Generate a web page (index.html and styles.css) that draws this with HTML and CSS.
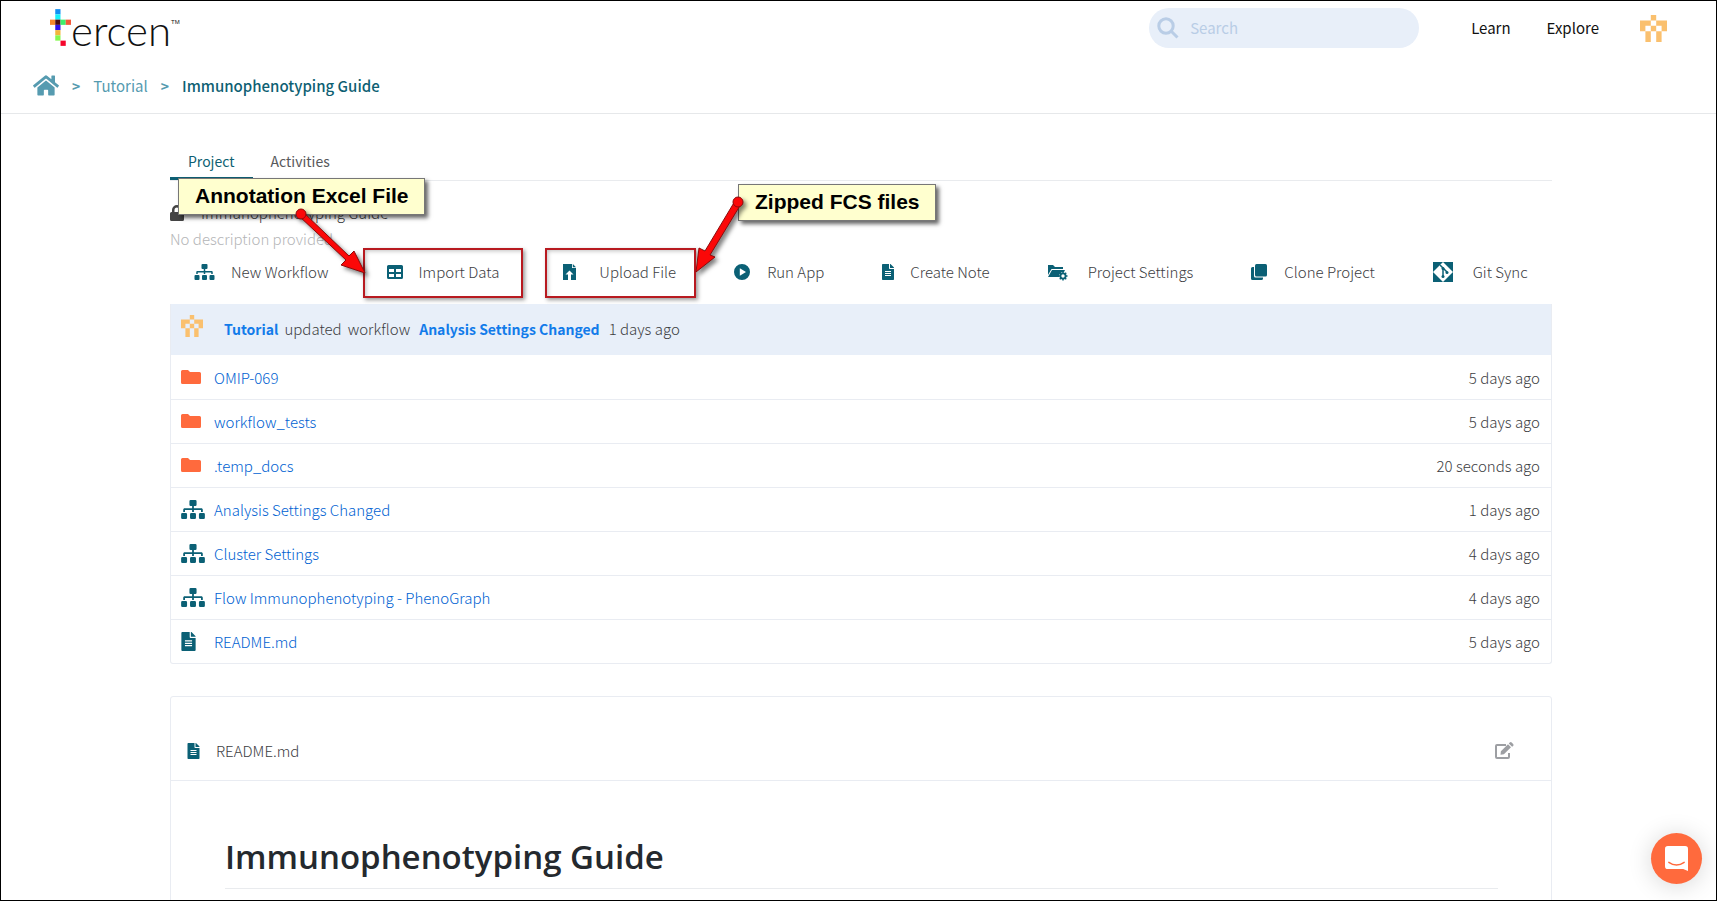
FILE: index.html
```html
<!DOCTYPE html>
<html lang="en">
<head>
<meta charset="utf-8">
<title>Immunophenotyping Guide - Tercen</title>
<link rel="stylesheet" href="styles.css">
</head>
<body>
<svg class="defs" aria-hidden="true">
  <symbol id="sitemap" viewBox="0 0 640 512"><path d="M128 352H32a32 32 0 0 0-32 32v96a32 32 0 0 0 32 32h96a32 32 0 0 0 32-32v-96a32 32 0 0 0-32-32zm-24-80h192v48h48v-48h192v48h48v-57c0-21-17-39-39-39H344v-64h40a32 32 0 0 0 32-32V32a32 32 0 0 0-32-32H256a32 32 0 0 0-32 32v96a32 32 0 0 0 32 32h40v64H95c-22 0-39 18-39 39v57h48zm264 80h-96a32 32 0 0 0-32 32v96a32 32 0 0 0 32 32h96a32 32 0 0 0 32-32v-96a32 32 0 0 0-32-32zm240 0h-96a32 32 0 0 0-32 32v96a32 32 0 0 0 32 32h96a32 32 0 0 0 32-32v-96a32 32 0 0 0-32-32z"/></symbol>
  <symbol id="file" viewBox="0 0 384 512"><path fill-rule="evenodd" d="M224 136V0H24A24 24 0 0 0 0 24v464a24 24 0 0 0 24 24h336a24 24 0 0 0 24-24V160H248a24 24 0 0 1-24-24zm64 248H96v-32h192zm0-64H96v-32h192zm0-64H96v-32h192zM384 122v6H256V0h6c6 0 13 3 17 7l98 98c4 4 7 11 7 17z"/></symbol>
  <symbol id="folder" viewBox="0 0 20 14"><path d="M1.500 0H7l2 2h9.500A1.500 1.500 0 0 1 20 3.500v9a1.500 1.500 0 0 1-1.500 1.500h-17A1.500 1.500 0 0 1 0 12.500v-11A1.500 1.500 0 0 1 1.500 0z"/></symbol>
  <symbol id="avatar" viewBox="0 0 5 5"><path d="M2 0h1v1h-1zM0 1h2v1h-1v1h-1zM3 1h2v2h-1v-1h-1zM2 2h1v1h-1zM1 3h1v2h-1zM3 3h1v2h-1z"/></symbol>
</svg>

<header class="header">
  <div class="topbar">
    <a class="logo" href="#" aria-label="tercen">
      <svg class="logo-mark" viewBox="0 0 4 7" aria-hidden="true">
        <path fill="#118ef2" d="M1 0h1v1H1z"/><path fill="#16f1f9" d="M1 1h1v1H1z"/>
        <path fill="#f68a2c" d="M0 2h1v1H0z"/><path fill="#4a0d10" d="M1 2h1v1H1z"/><path fill="#3ef06c" d="M2 2h1v1H2z"/><path fill="#f4593a" d="M3 2h1v1H3z"/>
        <path fill="#2b12ea" d="M1 3h1v1H1z"/><path fill="#f1b53c" d="M1 4h1v1H1z"/><path fill="#83f84e" d="M1 5h1v1H1z"/><path fill="#f5062c" d="M2 6h1v1H2z"/>
      </svg>
      <span class="logo-word">ercen</span><span class="logo-tm">TM</span>
    </a>
    <nav class="topnav">
      <label class="search">
        <svg viewBox="0 0 22 22" aria-hidden="true"><circle cx="9" cy="9" r="7.200"/><path d="M14.500 14.500L20.500 20.500"/></svg>
        <input type="search" placeholder="Search" aria-label="Search">
      </label>
      <a class="learn" href="#">Learn</a>
      <a class="explore" href="#">Explore</a>
      <a class="me" href="#" aria-label="Account"><svg class="avatar" preserveAspectRatio="none"><use href="#avatar"/></svg></a>
    </nav>
  </div>
  <nav class="crumbs" aria-label="Breadcrumb">
    <a href="#" aria-label="Home"><svg class="home" viewBox="0 0 576 512"><path d="M280 148L96 300v164a16 16 0 0 0 16 16h112a16 16 0 0 0 16-16v-96a16 16 0 0 1 16-16h64a16 16 0 0 1 16 16v96a16 16 0 0 0 16 16h112a16 16 0 0 0 16-16V300L296 148a12 12 0 0 0-16 0zM572 251l-84-69V44a12 12 0 0 0-12-12h-56a12 12 0 0 0-12 12v73l-90-74a48 48 0 0 0-61 0L4 251a12 12 0 0 0-1 17l25 31a12 12 0 0 0 17 2L280 107a12 12 0 0 1 16 0l235 194a12 12 0 0 0 17-2l25-31a12 12 0 0 0-1-17z"/></svg></a>
    <span class="sep">&gt;</span>
    <a href="#">Tutorial</a>
    <span class="sep">&gt;</span>
    <a class="current" href="#">Immunophenotyping Guide</a>
  </nav>
</header>

<main class="page">
  <nav class="tabs">
    <a class="tab active" href="#">Project</a>
    <a class="tab" href="#">Activities</a>
  </nav>

  <section class="summary">
    <div class="title"><svg class="lock" viewBox="0 0 14 16"><path fill-rule="evenodd" d="M2 7V5a5 5 0 0 1 10 0v2h.500A1.500 1.500 0 0 1 14 8.500v6a1.500 1.500 0 0 1-1.500 1.500h-11A1.500 1.500 0 0 1 0 14.500v-6A1.500 1.500 0 0 1 1.500 7zm2.500 0h5V5a2.500 2.500 0 0 0-5 0z"/></svg><span>Immunophenotyping Guide</span></div>
    <p class="desc">No description provided</p>
    <div class="callout callout-annotation">Annotation Excel File</div>
    <div class="callout callout-zipped">Zipped FCS files</div>
  </section>

  <div class="toolbar">
    <button type="button"><svg width="21" height="16"><use href="#sitemap"/></svg>New Workflow</button>
    <button type="button" class="marked import"><svg width="16" height="16" viewBox="0 0 16 16"><path fill-rule="evenodd" d="M1.500 1h13A1.500 1.500 0 0 1 16 2.500v11a1.500 1.500 0 0 1-1.500 1.500h-13A1.500 1.500 0 0 1 0 13.500v-11A1.500 1.500 0 0 1 1.500 1zM2 5v3h5V5zm7 0v3h5V5zM2 10v3h5v-3zm7 0v3h5v-3z"/></svg>Import Data</button>
    <button type="button" class="marked upload"><svg width="20" height="16" viewBox="0 0 20 16"><path fill-rule="evenodd" d="M0 0h9v4h4v12H0zM6.500 6.500L2.500 10.500h2.500V16h3v-5.500h2.500z"/><path d="M9.800 0L13 3.200H9.800z"/></svg>Upload File</button>
    <button type="button"><svg width="17" height="16" viewBox="0 0 17 16"><path fill-rule="evenodd" d="M8 0a8 8 0 1 1 0 16A8 8 0 0 1 8 0zM5.800 4.200v7.600L12 8z"/></svg>Run App</button>
    <button type="button"><svg width="12" height="16"><use href="#file"/></svg>Create Note</button>
    <button type="button"><svg width="24" height="16" viewBox="0 0 24 16"><path d="M0 1h5l2 2h8v2H3.500L0 11zM4 6h13l-1 2a4.500 4.500 0 0 0-5 5H0z"/><circle cx="15" cy="12" r="2.600" fill="none" stroke="currentColor" stroke-width="1.800"/><path fill="none" stroke="currentColor" stroke-width="1.500" d="M15 7.500v2M15 14.500v2M10.500 12h2M17.500 12h2M11.800 8.800l1.400 1.400M16.800 13.800l1.400 1.400M11.800 15.200l1.400-1.400M16.800 10.200l1.400-1.400"/></svg>Project Settings</button>
    <button type="button"><svg width="17" height="16" viewBox="0 0 17 16"><rect x="4" width="12" height="12.500" rx="1.500"/><path d="M0 4.500A1.500 1.500 0 0 1 1.500 3H3v9a1.500 1.500 0 0 0 1.500 1.500H12v1a1.500 1.500 0 0 1-1.500 1.500h-9A1.500 1.500 0 0 1 0 14.500z"/></svg>Clone Project</button>
    <button type="button"><svg width="24" height="20" viewBox="0 0 24 20"><path d="M0 0h20v20H0z"/><path fill="#fff" d="M10 0l10 10-10 10L0 10z"/><g fill="none" stroke="currentColor" stroke-width="1.500"><path d="M7 3l7 7M10 6v9"/></g><circle cx="10" cy="6.500" r="1.500"/><circle cx="10" cy="14.500" r="1.500"/><circle cx="14" cy="10.500" r="1.500"/></svg>Git Sync</button>
    <svg class="arrow arrow-import" viewBox="0 0 78 78" aria-hidden="true"><path d="M11 7L57 51L62 46L73 68L49 60L54 55L7 11z"/><circle cx="9" cy="9" r="5"/></svg>
    <svg class="arrow arrow-upload" viewBox="0 0 58 86" aria-hidden="true"><path d="M49 6L19 56L13 53L10 77L29 62L24 60L55 9z"/><circle cx="52" cy="7" r="5"/></svg>
  </div>

  <section class="files">
    <div class="activity">
      <svg class="avatar" preserveAspectRatio="none"><use href="#avatar"/></svg>
      <p><a href="#">Tutorial</a><span>updated</span><span>workflow</span><a class="target" href="#">Analysis Settings Changed</a><span>1 days ago</span></p>
    </div>
    <table>
      <tbody>
        <tr><td><svg class="folder"><use href="#folder"/></svg></td><td><a href="#">OMIP-069</a></td><td>5 days ago</td></tr>
        <tr><td><svg class="folder"><use href="#folder"/></svg></td><td><a href="#">workflow_tests</a></td><td>5 days ago</td></tr>
        <tr><td><svg class="folder"><use href="#folder"/></svg></td><td><a href="#">.temp_docs</a></td><td>20 seconds ago</td></tr>
        <tr><td><svg class="flow"><use href="#sitemap"/></svg></td><td><a href="#">Analysis Settings Changed</a></td><td>1 days ago</td></tr>
        <tr><td><svg class="flow"><use href="#sitemap"/></svg></td><td><a href="#">Cluster Settings</a></td><td>4 days ago</td></tr>
        <tr><td><svg class="flow"><use href="#sitemap"/></svg></td><td><a href="#">Flow Immunophenotyping - PhenoGraph</a></td><td>4 days ago</td></tr>
        <tr><td><svg class="doc"><use href="#file"/></svg></td><td><a href="#">README.md</a></td><td>5 days ago</td></tr>
      </tbody>
    </table>
  </section>

  <article class="readme">
    <div class="readme-head">
      <svg class="readme-icon"><use href="#file"/></svg>
      <span>README.md</span>
      <button type="button" aria-label="Edit"><svg width="19" height="17" viewBox="0 0 19 17"><path fill="none" stroke="currentColor" stroke-width="2" d="M11 3H2a1 1 0 0 0-1 1v11a1 1 0 0 0 1 1h11a1 1 0 0 0 1-1v-4"/><path d="M5.500 12.800l.400-3.500L13 2.200l3 3-7.100 7.100zM13.800 1.400l.900-.9a1.500 1.500 0 0 1 2 0l1.400 1.400a1.500 1.500 0 0 1 0 2l-1 .9z"/></svg></button>
    </div>
    <div class="readme-body"><h1>Immunophenotyping Guide</h1></div>
  </article>
</main>

<button type="button" class="chat" aria-label="Open chat"><svg viewBox="0 0 24 26"><path fill="#fff" d="M3 0h18a3 3 0 0 1 3 3v23l-5-2H3a3 3 0 0 1-3-3V3a3 3 0 0 1 3-3z"/><path fill="none" stroke="#ff6a3d" stroke-width="1.500" stroke-linecap="round" d="M4 17c5 3.500 11 3.500 16 0"/></svg></button>
</body>
</html>
```
FILE: styles.css
```css
* { box-sizing: border-box; }
body {
  margin: 0;
  height: 100vh;
  overflow: hidden;
  position: relative;
  border: 1px solid #000;
  background: #fff;
  color: #3c3d3f;
  font: 300 15px/20px "Noto Sans CJK SC", "Open Sans", sans-serif;
}
a { color: inherit; text-decoration: none; }
p { margin: 0; }
svg { display: block; flex: none; fill: currentColor; }
button { border: 0; padding: 0; background: none; color: inherit; font: inherit; cursor: pointer; }
.defs { position: absolute; width: 0; height: 0; }

.header { border-bottom: 1px solid #e6e8ea; }
.topbar { display: flex; justify-content: space-between; height: 56px; padding: 8px 49px 0 49px; }
.logo { display: flex; color: #111; }
.logo-mark { width: 21px; height: 37px; }
.logo-word { font: 300 42px/42px Lato, sans-serif; }
.logo-tm { margin-top: 10px; font: 6px/6px "Liberation Sans", sans-serif; }
.topnav { display: flex; height: 38px; align-items: center; color: #111; font-weight: 400; }
.search {
  display: flex;
  align-items: center;
  gap: 11px;
  width: 270px;
  height: 40px;
  padding: 0 8px;
  border-radius: 20px;
  background: #e8eff9;
  color: #b9cde6;
}
.search svg { width: 22px; height: 22px; fill: none; stroke: currentColor; stroke-width: 3; }
.search input { flex: 1; min-width: 0; padding: 0; border: 0; outline: 0; background: none; font: inherit; color: #333; }
.search input::placeholder { color: #b9cde6; opacity: 1; }
.learn { margin-left: 52px; }
.explore { margin-left: 36px; }
.me { margin-left: 41px; }
.avatar { width: 27px; height: 27px; color: #fac06e; }
.crumbs { display: flex; align-items: center; gap: 13px; height: 56px; padding: 1px 0 0 32px; color: #569bb0; font-weight: 400; }
.home { width: 26px; height: 23px; }
.sep { font-weight: 700; font-size: 14px; }
.current { color: #0e5f73; font-weight: 500; }

.page { margin: 0 164px 0 169px; padding-top: 28px; }
.tabs { display: flex; height: 39px; border-bottom: 1px solid #e9ebee; font-size: 14px; font-weight: 400; }
.tab { height: 38px; padding: 9px 18px; color: #58595b; }
.tab.active { color: #0e5f73; border-bottom: 3px solid #0e5f73; }
.summary { position: relative; padding-top: 22px; }
.title { display: flex; gap: 17px; align-items: center; height: 20px; }
.lock { width: 14px; height: 16px; color: #444; }
.desc { margin-top: 7px; line-height: 18px; color: #b4b5b7; }
.callout {
  position: absolute;
  z-index: 2;
  padding: 4px 15px 6px 16px;
  border: 1px solid #777;
  background: #ffffcf;
  box-shadow: 3px 3px 4px rgba(0, 0, 0, .6);
  color: #000;
  font: 700 21px/25px "Liberation Sans", sans-serif;
  white-space: nowrap;
}
.callout-annotation { left: 8px; top: -3px; }
.callout-zipped { left: 568px; top: 3px; }

.toolbar { position: relative; display: flex; align-items: flex-start; gap: 18px; height: 56px; padding-left: 4px; }
.toolbar button { display: flex; align-items: center; gap: 16px; height: 50px; padding: 0 20px 2px; white-space: nowrap; }
.toolbar button svg { color: #0b6075; overflow: visible; }
.toolbar .marked { outline: 2px solid #b81a20; outline-offset: -2px; box-shadow: 2px 2px 4px rgba(0, 0, 0, .4), inset 3px 3px 4px rgba(0, 0, 0, .25); }
.toolbar .import { margin: 0 4px 0 -4px; padding: 0 24px 2px; }
.toolbar .upload { padding-left: 18px; }
.arrow { position: absolute; z-index: 3; fill: #fb0808; stroke: #8d0a0a; stroke-width: 1; filter: drop-shadow(3px 3px 2px rgba(0, 0, 0, .5)); }
.arrow-import { left: 122px; top: -43px; width: 78px; height: 78px; }
.arrow-upload { left: 516px; top: -53px; width: 58px; height: 86px; }

.files { border: 1px solid #e9ecf2; border-top: 0; border-radius: 0 0 3px 3px; }
.activity { display: flex; gap: 21px; align-items: flex-start; height: 51px; padding: 11px 10px 0; background: #e8eff9; }
.activity .avatar { width: 22px; height: 22px; }
.activity p { display: flex; gap: 6px; padding-top: 4px; }
.activity a { color: #127bea; font-size: 14px; font-weight: 700; }
.activity .target { margin: 0 3px; }
table { width: 100%; border-collapse: collapse; }
td { height: 44px; padding: 2px 0 0; border-bottom: 1px solid #e9ecf2; }
tr:last-child td { border-bottom: 0; }
td:first-child { width: 43px; padding: 0 0 0 10px; }
td:last-child { padding-right: 11px; text-align: right; }
td a { color: #0062d2; }
.folder { width: 20px; height: 14px; color: #ff6a3d; }
.flow { width: 24px; height: 19px; color: #0b6075; }
.doc { width: 15px; height: 19px; color: #0b6075; }

.readme { margin-top: 32px; border: 1px solid #e9ecf2; border-radius: 3px; }
.readme-head { display: flex; align-items: center; height: 84px; padding: 24px 37px 0 16px; border-bottom: 1px solid #e9ecf2; }
.readme-icon { width: 13px; height: 16px; color: #0b6075; }
.readme-head span { flex: 1; margin-left: 16px; }
.readme-head button { color: #9d9fa3; }
.readme-body { height: 200px; padding: 56px 53px 0 54px; }
h1 { margin: 0; padding-bottom: 11px; border-bottom: 1px solid #e9ebee; color: #24292e; font: 600 33px/40px "Open Sans", sans-serif; }

.chat { position: absolute; right: 14px; bottom: 16px; display: grid; place-items: center; width: 51px; height: 51px; border-radius: 50%; background: #ff6a3d; box-shadow: 0 2px 24px rgba(0, 0, 0, .16); }
.chat svg { width: 23px; height: 25px; }
```
